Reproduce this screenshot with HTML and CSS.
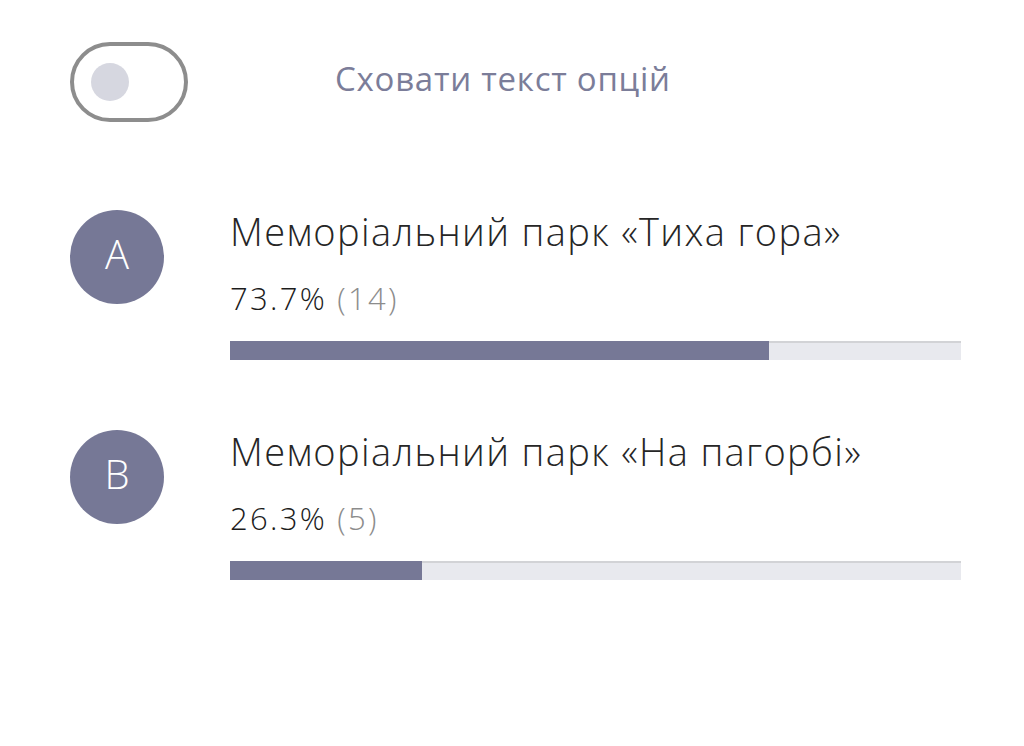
FILE: index.html
```html
<!DOCTYPE html>
<html lang="uk">
<head>
<meta charset="utf-8">
<title>Результати опитування</title>
<link rel="stylesheet" href="styles.css">
</head>
<body>
<main class="poll">
  <label class="toggle-row">
    <span class="switch"><span class="knob"></span></span>
    <span class="toggle-label">Сховати текст опцій</span>
  </label>

  <ul class="options">
    <li class="option">
      <span class="badge">A</span>
      <div class="option-body">
        <div class="option-title">Меморіальний парк «Тиха гора»</div>
        <div class="option-stat">73.7% <span class="count">(14)</span></div>
        <div class="track"><div class="fill" style="width: 73.7%"></div></div>
      </div>
    </li>
    <li class="option">
      <span class="badge">B</span>
      <div class="option-body">
        <div class="option-title">Меморіальний парк «На пагорбі»</div>
        <div class="option-stat">26.3% <span class="count">(5)</span></div>
        <div class="track"><div class="fill" style="width: 26.3%"></div></div>
      </div>
    </li>
  </ul>
</main>
</body>
</html>
```

FILE: styles.css
```css
* {
  box-sizing: border-box;
}

html, body {
  margin: 0;
  background: #ffffff;
}

body {
  font-family: "Open Sans", "Noto Sans", sans-serif;
  font-weight: 300;
  color: #222222;
}

.poll {
  padding: 42px 63px 0 70px;
}

/* switch + caption */
.toggle-row {
  display: flex;
  align-items: flex-start;
  gap: 147px;
}

.switch {
  flex: none;
  width: 118px;
  height: 80px;
  border: 4px solid #8d8d8d;
  border-radius: 40px;
  display: flex;
  align-items: center;
  padding-left: 17px;
}

.knob {
  width: 38px;
  height: 38px;
  border-radius: 50%;
  background: #d6d7e0;
}

.toggle-label {
  margin-top: 17px;
  font-size: 33px;
  font-weight: 400;
  line-height: 40px;
  letter-spacing: 0.75px;
  color: #7b7d99;
}

/* options list */
.options {
  list-style: none;
  margin: 88px 0 0;
  padding: 0;
  display: flex;
  flex-direction: column;
  gap: 70px;
}

.option {
  display: flex;
  align-items: flex-start;
  gap: 66px;
}

.badge {
  flex: none;
  width: 94px;
  height: 94px;
  padding-bottom: 7px;
  border-radius: 50%;
  background: #767896;
  color: #ffffff;
  font-size: 40px;
  display: flex;
  align-items: center;
  justify-content: center;
}

.option-body {
  flex: 1;
}

.option-title {
  font-size: 38px;
  line-height: 42px;
  letter-spacing: 1.35px;
  color: #262626;
}

.option-stat {
  margin-top: 28px;
  font-size: 31px;
  line-height: 36px;
  letter-spacing: 2.3px;
  color: #1c1c1c;
}

.count {
  color: #8c8c8c;
}

.track {
  margin-top: 25px;
  height: 19px;
  background: #e8e9ee;
  box-shadow: inset 0 2px 0 #d2d3d6;
}

.fill {
  height: 100%;
  background: #767896;
}
```
